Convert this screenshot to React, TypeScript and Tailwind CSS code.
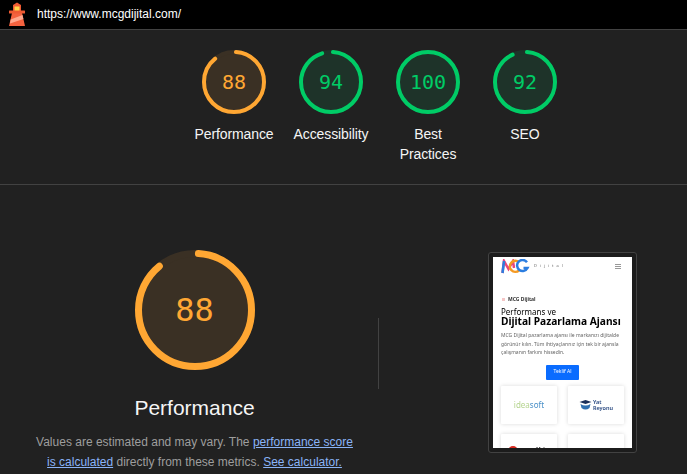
const ORANGE = "#ffa733";
const GREEN = "#00cc66";

function Gauge({ size, stroke, score, color, fill }: { size: number; stroke: number; score: number; color: string; fill: string }) {
  const r = (size - stroke) / 2;
  const c = 2 * Math.PI * r;
  const len = (score / 100) * c;
  const capOffset = score === 100 ? 0 : stroke / 2;
  return (
    <svg width={size} height={size} viewBox={`0 0 ${size} ${size}`} className="block">
      <circle cx={size / 2} cy={size / 2} r={r} fill={fill} stroke={fill} strokeWidth={stroke} />
      <circle
        cx={size / 2}
        cy={size / 2}
        r={r}
        fill="none"
        stroke={color}
        strokeWidth={stroke}
        strokeLinecap={score === 100 ? "butt" : "round"}
        strokeDasharray={`${len} ${c}`}
        strokeDashoffset={-capOffset}
        transform={`rotate(-90 ${size / 2} ${size / 2})`}
      />
    </svg>
  );
}

function ScoreItem({ score, label, color, fill, text }: { score: number; label: string; color: string; fill: string; text: string }) {
  return (
    <div className="flex w-[97px] flex-col items-center">
      <div className="relative h-16 w-16">
        <Gauge size={64} stroke={4} score={score} color={color} fill={fill} />
        <span className={`absolute inset-0 flex items-center justify-center font-['DejaVu_Sans_Mono',monospace] text-[20px] leading-none ${text}`}>{score}</span>
      </div>
      <div className="mt-[10px] w-[97px] px-2 text-center text-[14px] leading-[20px] tracking-[-0.1px] text-[#f5f5f5]">{label}</div>
    </div>
  );
}

function Lighthouse() {
  return (
    <svg width="20" height="24" viewBox="0 0 20 24" className="block">
      <path d="M5 11 L15 11 L18 24 L2 24 Z" fill="#f4623f" />
      <path d="M3.7 17.5 L15.5 13 L16.4 17 L3 21.5 Z" fill="#ffa88e" />
      <rect x="2" y="8.5" width="16" height="3" rx="0.5" fill="#ef5a33" />
      <path d="M6 9 L6 3 L10 0.5 L14 3 L14 9 Z" fill="#ef5a33" />
      <rect x="7.5" y="4.5" width="5" height="4" fill="#ffd54a" />
    </svg>
  );
}

function Thumbnail() {
  return (
    <div className="flex h-[201px] w-[149px] flex-col rounded-[3px] border border-[#424242] bg-[#1c1c1c] p-1">
      <div className="flex h-[191px] w-[139px] flex-col overflow-hidden bg-white px-2 font-['Noto_Sans',sans-serif] blur-[0.3px]">
        <div className="flex h-4 shrink-0 items-center justify-between pr-[3px] pt-[2px]">
          <div className="flex items-center">
            <svg width="30" height="15" viewBox="0 0 30 15" className="block">
              <path d="M1.5 14 L3 2 L7.5 10 L12 2 L13 9" fill="none" stroke="#e8467c" strokeWidth="2.5" />
              <path d="M1.5 14 L3 2" fill="none" stroke="#2b7de0" strokeWidth="2.5" />
              <path d="M18 3.2 A5.5 5.5 0 1 0 18 11.5" fill="none" stroke="#f59a23" strokeWidth="2.5" />
              <path d="M26 3.2 A5.5 5.5 0 1 0 26.5 9 L22.5 9" fill="none" stroke="#2b7de0" strokeWidth="2.5" />
            </svg>
            <span className="ml-[3px] text-[4px] tracking-[3px] text-[#666]">Dijital</span>
          </div>
          <div className="flex w-[6px] flex-col gap-px">
            <div className="h-px bg-[#999]" />
            <div className="h-px bg-[#999]" />
            <div className="h-px bg-[#999]" />
          </div>
        </div>
        <div className="mt-[22px] flex shrink-0 items-center gap-[3px] pl-[1px] text-[5px] font-bold leading-[8px] text-[#333]">
          <span className="h-[3px] w-[3px] bg-[#f5c6c6]" />
          MCG Dijital
        </div>
        <div className="mt-[4px] shrink-0 text-[8px] leading-[9px] text-black">Performans ve</div>
        <div className="shrink-0 whitespace-nowrap text-[10.2px] font-bold leading-[11px] text-black">Dijital Pazarlama Ajansı</div>
        <div className="mt-[4px] shrink-0 whitespace-nowrap text-[5px] leading-[8.5px] text-[#666]">
          MCG Dijital pazarlama ajansı ile markanızı dijitalde<br />görünür kılın. Tüm ihtiyaçlarınız için tek bir ajansla<br />çalışmanın farkını hissedin.
        </div>
        <div className="mt-[8px] flex shrink-0 justify-center">
          <div className="flex h-[15px] w-[33px] items-center justify-center rounded-[1px] bg-[#0a6cff] text-[5px] text-white">Teklif Al</div>
        </div>
        <div className="mt-[6px] grid shrink-0 grid-cols-[56px_56px] gap-x-[11px] gap-y-[10px]">
          <div className="flex h-[38px] items-center justify-center rounded-[1px] bg-white text-[8px] shadow-[0_0_4px_rgba(0,0,0,0.15)]">
            <span className="text-[#b5d48f]">idea</span><span className="text-[#4a90c8]">soft</span>
          </div>
          <div className="flex h-[38px] items-center justify-center gap-[1px] rounded-[1px] bg-white shadow-[0_0_4px_rgba(0,0,0,0.15)]">
            <svg width="13" height="11" viewBox="0 0 12 11" className="block">
              <path d="M0 3 L6 1 L12 3 L6 5 Z" fill="#1a2f5a" />
              <path d="M1 5 Q6 8 11 5 L10 9 Q6 12 2 9 Z" fill="#2f6fb0" />
            </svg>
            <span className="text-[5.5px] font-semibold leading-[6px] text-[#24457e]">Yat<br />Reyonu</span>
          </div>
          <div className="flex h-[38px] items-start gap-[18px] rounded-[1px] bg-white pl-[7px] pt-3 shadow-[0_0_4px_rgba(0,0,0,0.15)]">
            <span className="h-[10px] w-[10px] shrink-0 rounded-full bg-[#d9281e]" />
            <span className="text-[5px] font-bold text-[#444]">Mcb</span>
          </div>
          <div className="flex h-[38px] items-start justify-center rounded-[1px] bg-white pt-3 shadow-[0_0_4px_rgba(0,0,0,0.15)]">
            <span className="text-[6px] text-[#a98a3a]">Kombi</span>
          </div>
        </div>
      </div>
    </div>
  );
}

export default function App() {
  return (
    <div className="h-[474px] w-[687px] overflow-hidden bg-[#212121] font-['Liberation_Sans',Arial,sans-serif]">
      <header className="flex h-[30px] items-center gap-[10px] border-b border-[#424242] bg-black pb-[1px] pl-[7px]">
        <Lighthouse />
        <span className="text-[12px] leading-none text-white">https://www.mcgdijital.com/</span>
      </header>
      <section className="flex h-[155px] justify-center border-b border-[#424242] pl-[72px] pt-[20px]">
        <ScoreItem score={88} label="Performance" color={ORANGE} fill="#3a3024" text="text-[#ffa733]" />
        <ScoreItem score={94} label="Accessibility" color={GREEN} fill="#1e3329" text="text-[#00cc66]" />
        <ScoreItem score={100} label="Best Practices" color={GREEN} fill="#1e3329" text="text-[#00cc66]" />
        <ScoreItem score={92} label="SEO" color={GREEN} fill="#1e3329" text="text-[#00cc66]" />
      </section>
      <main className="flex">
        <div className="flex w-[378px] shrink-0 flex-col items-center pl-[11px] pt-[65px]">
          <div className="relative h-[120px] w-[120px]">
            <Gauge size={120} stroke={7} score={88} color={ORANGE} fill="#3a3024" />
            <span className="absolute inset-0 flex items-center justify-center font-['DejaVu_Sans_Mono',monospace] text-[32px] leading-none text-[#ffa733]">88</span>
          </div>
          <h1 className="mt-[14px] text-[21px] leading-[48px] text-[#f5f5f5]">Performance</h1>
          <p className="w-[322px] text-center text-[12px] leading-[20px] text-[#9e9e9e]">
            Values are estimated and may vary. The{" "}
            <a className="text-[#8ab4f8] underline">performance score is calculated</a>{" "}
            directly from these metrics.{" "}
            <a className="text-[#8ab4f8] underline">See calculator.</a>
          </p>
        </div>
        <div className="mt-[133px] h-[71px] w-px shrink-0 bg-[#424242]" />
        <div className="pl-[109px] pt-[67px]">
          <Thumbnail />
        </div>
      </main>
    </div>
  );
}
